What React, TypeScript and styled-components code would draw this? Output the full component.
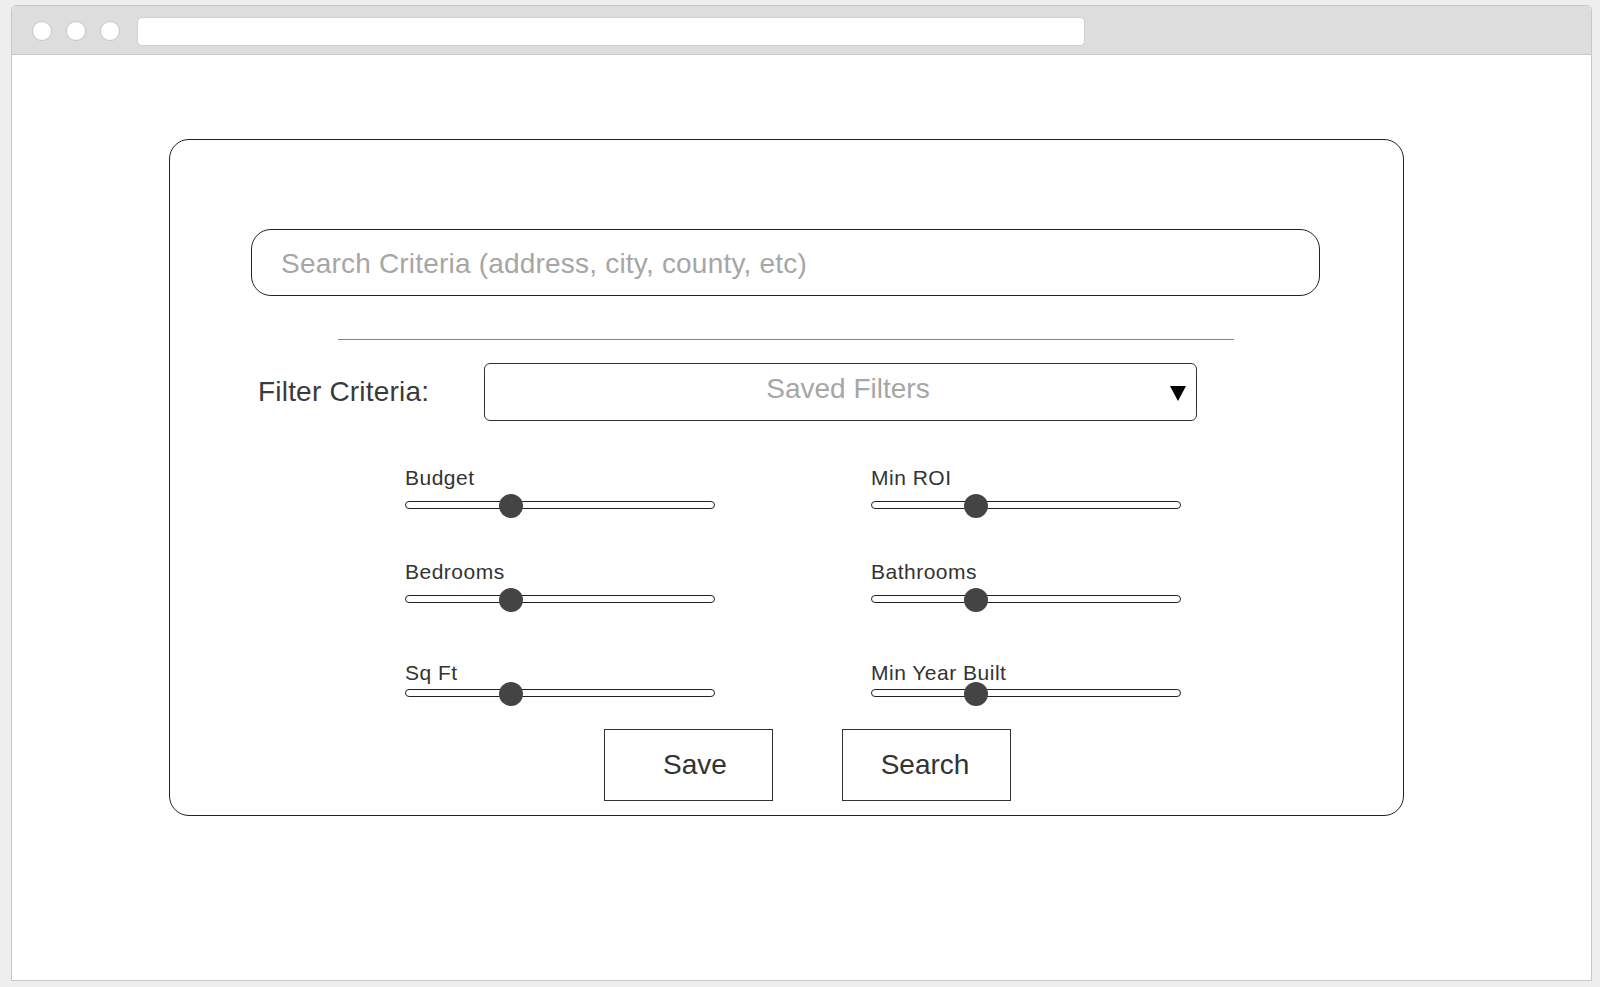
import styled, { createGlobalStyle } from "styled-components";

const GlobalStyle = createGlobalStyle`
  html, body {
    margin: 0;
    padding: 0;
    background: #eeeeee;
    font-family: "Liberation Sans", Arial, sans-serif;
  }
`;

const Page = styled.div`
  height: 987px;
  box-sizing: border-box;
  padding: 5px 0 0 11px;
`;

const BrowserWindow = styled.div`
  width: 1581px;
  height: 976px;
  box-sizing: border-box;
  border: 1px solid #c8c8c8;
  border-radius: 5px 5px 0 0;
  background: #ffffff;
  display: flex;
  flex-direction: column;
  overflow: hidden;
`;

const TitleBar = styled.div`
  height: 49px;
  box-sizing: border-box;
  background: #dddddd;
  border-bottom: 1px solid #c8c8c8;
  display: flex;
  align-items: center;
  padding: 2px 0 0 20px;
`;

const Dots = styled.div`
  display: flex;
  gap: 14px;
  margin-right: 17px;
`;

const Dot = styled.span`
  width: 20px;
  height: 20px;
  box-sizing: border-box;
  border-radius: 50%;
  border: 1px solid #c6c6c6;
  background: #ffffff;
`;

const UrlBar = styled.div`
  width: 948px;
  height: 29px;
  box-sizing: border-box;
  border: 1px solid #cfcfcf;
  border-radius: 5px;
  background: #ffffff;
`;

const Content = styled.div`
  flex: 1;
  padding: 84px 0 0 157px;
`;

const Card = styled.div`
  width: 1235px;
  height: 677px;
  box-sizing: border-box;
  border: 1px solid #222;
  border-radius: 20px;
  display: flex;
  flex-direction: column;
`;

const SearchInput = styled.input`
  margin: 89px 0 0 81px;
  width: 1069px;
  height: 67px;
  box-sizing: border-box;
  border: 1px solid #222;
  border-radius: 20px;
  padding: 2px 0 0 29px;
  font-family: "Liberation Sans", Arial, sans-serif;
  font-size: 28px;
  letter-spacing: 0.2px;
  color: #333;
  outline: none;
  background: #fff;

  &::placeholder {
    color: #a6a6a6;
  }
`;

const Divider = styled.div`
  margin: 43px 0 0 168px;
  width: 896px;
  height: 1px;
  background: #858585;
`;

const FilterRow = styled.div`
  display: flex;
  align-items: flex-start;
  margin-top: 23px;
  padding-left: 88px;
`;

const FilterLabel = styled.div`
  width: 226px;
  margin-top: 13px;
  font-size: 28px;
  line-height: 32px;
  color: #3a3a3a;
  letter-spacing: 0.2px;
`;

const Select = styled.div`
  position: relative;
  width: 713px;
  height: 58px;
  box-sizing: border-box;
  border: 1px solid #333;
  border-radius: 6px;
  display: flex;
  align-items: center;
  justify-content: center;
  padding: 0 0 6px 15px;
  font-size: 28px;
  color: #a6a6a6;
`;

const Arrow = styled.span`
  position: absolute;
  right: 10px;
  top: 22px;
  width: 0;
  height: 0;
  border-left: 8px solid transparent;
  border-right: 8px solid transparent;
  border-top: 15px solid #000;
`;

const SliderGrid = styled.div`
  display: grid;
  grid-template-columns: 310px 310px;
  column-gap: 156px;
  margin: 45px 0 0 235px;
`;

const Field = styled.div<{ $mt: number; $gap: number }>`
  display: flex;
  flex-direction: column;
  margin-top: ${(p) => p.$mt}px;
  gap: ${(p) => p.$gap}px;
`;

const FieldLabel = styled.div`
  font-size: 21px;
  line-height: 24px;
  color: #333;
  letter-spacing: 0.5px;
`;

const Track = styled.div`
  position: relative;
  height: 8px;
  box-sizing: border-box;
  border: 1.5px solid #222;
  border-radius: 4px;
  background: #fff;
`;

const Thumb = styled.span`
  position: absolute;
  top: -8.5px;
  width: 24px;
  height: 24px;
  border-radius: 50%;
  background: #444;
`;

const ButtonRow = styled.div`
  display: flex;
  gap: 69px;
  margin-top: 32px;
  padding-left: 434px;
`;

const Button = styled.button<{ $left?: number; $right?: number }>`
  width: 169px;
  height: 72px;
  box-sizing: border-box;
  border: 1px solid #333;
  border-radius: 0;
  background: #fff;
  padding: 0 ${(p) => p.$right ?? 0}px 0 ${(p) => p.$left ?? 0}px;
  font-family: "Liberation Sans", Arial, sans-serif;
  font-size: 28px;
  color: #333;
  cursor: pointer;
`;

const sliders = [
  { label: "Budget", mt: 0, gap: 11, pos: 92.5 },
  { label: "Min ROI", mt: 0, gap: 11, pos: 92 },
  { label: "Bedrooms", mt: 51, gap: 11, pos: 92.5 },
  { label: "Bathrooms", mt: 51, gap: 11, pos: 92 },
  { label: "Sq Ft", mt: 58, gap: 4, pos: 92.5 },
  { label: "Min Year Built", mt: 58, gap: 4, pos: 92 },
];

export default function App() {
  return (
    <Page>
      <GlobalStyle />
      <BrowserWindow>
        <TitleBar>
          <Dots>
            <Dot />
            <Dot />
            <Dot />
          </Dots>
          <UrlBar />
        </TitleBar>
        <Content>
          <Card>
            <SearchInput placeholder="Search Criteria (address, city, county, etc)" />
            <Divider />
            <FilterRow>
              <FilterLabel>Filter Criteria:</FilterLabel>
              <Select>
                Saved Filters
                <Arrow />
              </Select>
            </FilterRow>
            <SliderGrid>
              {sliders.map((s) => (
                <Field key={s.label} $mt={s.mt} $gap={s.gap}>
                  <FieldLabel>{s.label}</FieldLabel>
                  <Track>
                    <Thumb style={{ left: s.pos }} />
                  </Track>
                </Field>
              ))}
            </SliderGrid>
            <ButtonRow>
              <Button $left={13}>Save</Button>
              <Button $right={3}>Search</Button>
            </ButtonRow>
          </Card>
        </Content>
      </BrowserWindow>
    </Page>
  );
}
